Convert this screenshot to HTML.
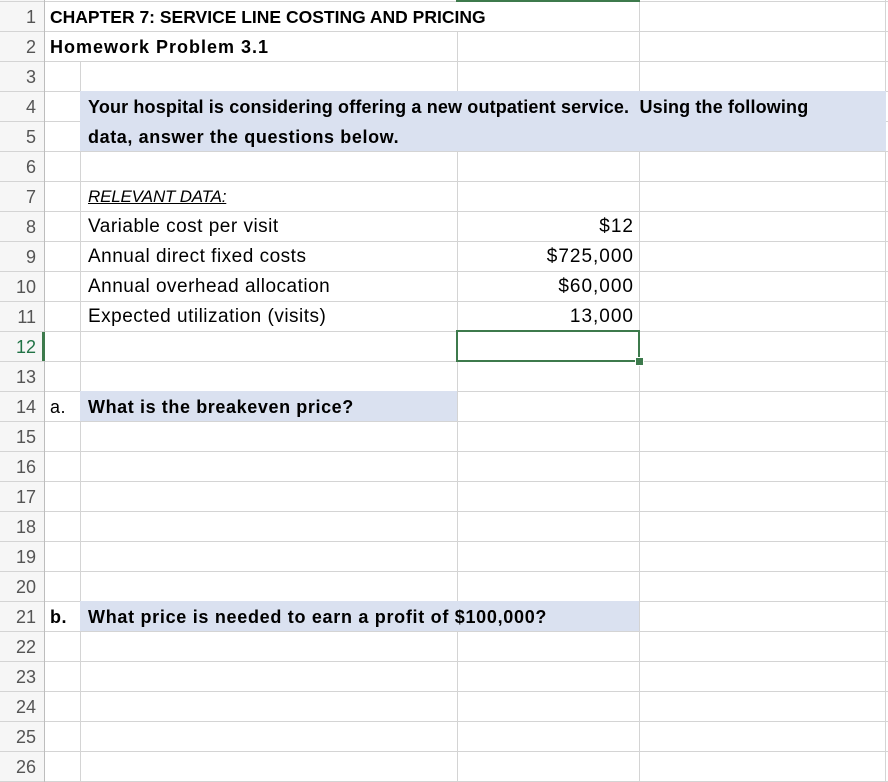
<!DOCTYPE html>
<html><head><meta charset="utf-8"><style>
html,body{margin:0;padding:0;background:#fff;width:888px;height:782px;overflow:hidden;position:relative;font-family:"Liberation Sans",Arial,sans-serif;}
.h{position:absolute;height:1px;background:#d4d4d4;}
.v{position:absolute;width:1px;background:#d4d4d4;}
.f{position:absolute;background:#dae1f0;}
.t{position:absolute;font-size:19px;line-height:30px;color:#000;white-space:nowrap;letter-spacing:0.5px;}
.b{font-weight:bold;font-size:18px;}
.n{position:absolute;left:0;width:36px;text-align:right;font-size:18px;line-height:30px;color:#555;}
.r{text-align:right;letter-spacing:1px;}
</style></head><body>
<div style="position:absolute;left:0;top:0;width:44px;height:782px;background:#f6f6f6"></div>
<div id="g"></div>
<script>
var g=document.getElementById('g'),h='';
for(var i=0;i<=26;i++){var y=1+i*30;h+='<div class="h" style="left:0;width:888px;top:'+y+'px"></div>';}
h+='<div class="v" style="left:44px;top:0;height:782px;background:#bdbdbd"></div>';
h+='<div class="v" style="left:80px;top:61px;height:721px"></div>';
h+='<div class="v" style="left:457px;top:31px;height:751px"></div>';
h+='<div class="v" style="left:639px;top:0;height:782px"></div>';
h+='<div class="v" style="left:885px;top:0;height:782px"></div>';
h+='<div class="f" style="left:80px;top:91px;width:806px;height:60px"></div>';
h+='<div class="f" style="left:80px;top:391px;width:377px;height:30px"></div>';
h+='<div class="f" style="left:80px;top:601px;width:559px;height:30px"></div>';
for(var i=1;i<=26;i++){h+='<div class="n" style="top:'+(2+(i-1)*30)+'px;'+(i==12?'color:#217346':'')+'">'+i+'</div>';}
g.innerHTML=h;
</script>
<div style="position:absolute;left:456px;top:0;width:184px;height:2px;background:#3d7a4c"></div>
<div style="position:absolute;left:42px;top:332px;width:3px;height:29px;background:#3d7a4c"></div>
<div style="position:absolute;left:456px;top:330px;border:2px solid #3d7a4c;width:180px;height:28px"></div>
<div style="position:absolute;left:635px;top:357px;width:7px;height:7px;background:#3d7a4c;border:1px solid #fff"></div>

<div class="t b" style="left:50px;top:2px;font-size:17.5px;letter-spacing:0">CHAPTER 7: SERVICE LINE COSTING AND PRICING</div>
<div class="t b" style="left:50px;top:32px;letter-spacing:1px">Homework Problem 3.1</div>
<div class="t b" style="left:88px;top:92px;letter-spacing:0.15px">Your hospital is considering offering a new outpatient service.&nbsp; Using the following</div>
<div class="t b" style="left:88px;top:122px;letter-spacing:0.6px">data, answer the questions below.</div>
<div class="t" style="left:88px;top:182px;font-size:17px;font-style:italic;text-decoration:underline;letter-spacing:-0.2px">RELEVANT DATA:</div>
<div class="t" style="left:88px;top:212px">Variable cost per visit</div>
<div class="t" style="left:88px;top:242px">Annual direct fixed costs</div>
<div class="t" style="left:88px;top:272px">Annual overhead allocation</div>
<div class="t" style="left:88px;top:302px">Expected utilization (visits)</div>
<div class="t r" style="right:254px;top:212px">$12</div>
<div class="t r" style="right:254px;top:242px">$725,000</div>
<div class="t r" style="right:254px;top:272px">$60,000</div>
<div class="t r" style="right:254px;top:302px">13,000</div>
<div class="t" style="left:50px;top:392px;font-size:18px">a.</div>
<div class="t b" style="left:88px;top:392px;letter-spacing:0.6px">What is the breakeven price?</div>
<div class="t b" style="left:50px;top:602px">b.</div>
<div class="t b" style="left:88px;top:602px;letter-spacing:0.7px">What price is needed to earn a profit of $100,000?</div>
</body></html>
